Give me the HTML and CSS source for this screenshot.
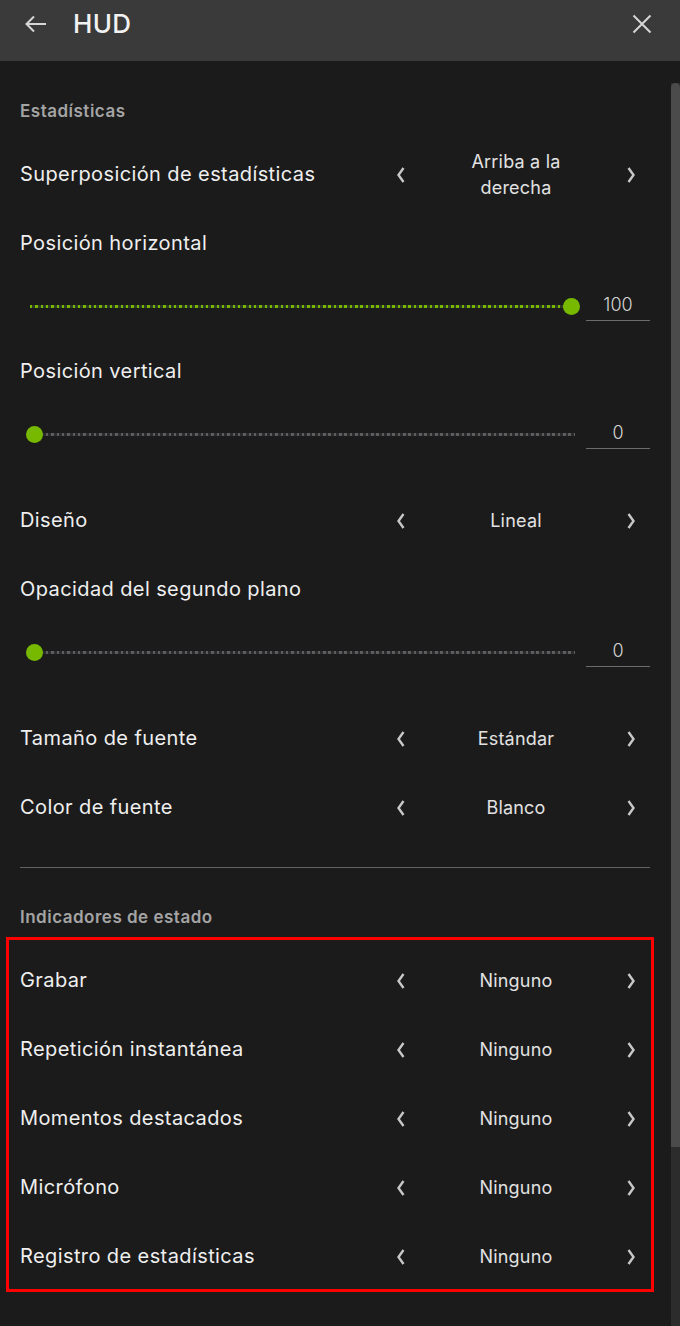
FILE: index.html
```html
<!DOCTYPE html>
<html lang="es">
<head>
<meta charset="utf-8">
<title>HUD</title>
<link rel="stylesheet" href="styles.css">
</head>
<body>
<header class="topbar">
  <svg class="icon back" width="24" height="20" viewBox="0 0 24 20"><path d="M22 10H3M10 2.5L2.5 10L10 17.5" fill="none" stroke="#d6d6d6" stroke-width="2"/></svg>
  <h1 class="title">HUD</h1>
  <svg class="icon close" width="20" height="20" viewBox="0 0 20 20"><path d="M1.5 1.5L18.5 18.5M18.5 1.5L1.5 18.5" fill="none" stroke="#d6d6d6" stroke-width="2"/></svg>
</header>

<main class="panel">
  <section class="group">
    <h2 class="section-title">Estadísticas</h2>

    <div class="row">
      <span class="label">Superposición de estadísticas</span>
      <div class="control">
        <span class="chev"><svg width="12" height="18" viewBox="0 0 12 18"><path d="M8.5 2L3.5 9L8.5 16" fill="none" stroke="#c8c8c8" stroke-width="2.4"/></svg></span>
        <span class="value two">Arriba a la derecha</span>
        <span class="chev"><svg width="12" height="18" viewBox="0 0 12 18"><path d="M3.5 2L8.5 9L3.5 16" fill="none" stroke="#c8c8c8" stroke-width="2.4"/></svg></span>
      </div>
    </div>

    <div class="row"><span class="label">Posición horizontal</span></div>
    <div class="slider-row">
      <div class="slider">
        <div class="track"><div class="fill" style="width:100%"></div><div class="rest"></div></div>
        <span class="thumb" style="left:calc((100% - 16px) * 1)"></span>
      </div>
      <div class="num">100</div>
    </div>

    <div class="row"><span class="label">Posición vertical</span></div>
    <div class="slider-row spaced">
      <div class="slider">
        <div class="track"><div class="fill" style="width:0%"></div><div class="rest"></div></div>
        <span class="thumb" style="left:calc((100% - 16px) * 0)"></span>
      </div>
      <div class="num">0</div>
    </div>

    <div class="row">
      <span class="label">Diseño</span>
      <div class="control">
        <span class="chev"><svg width="12" height="18" viewBox="0 0 12 18"><path d="M8.5 2L3.5 9L8.5 16" fill="none" stroke="#c8c8c8" stroke-width="2.4"/></svg></span>
        <span class="value">Lineal</span>
        <span class="chev"><svg width="12" height="18" viewBox="0 0 12 18"><path d="M3.5 2L8.5 9L3.5 16" fill="none" stroke="#c8c8c8" stroke-width="2.4"/></svg></span>
      </div>
    </div>

    <div class="row"><span class="label">Opacidad del segundo plano</span></div>
    <div class="slider-row spaced">
      <div class="slider">
        <div class="track"><div class="fill" style="width:0%"></div><div class="rest"></div></div>
        <span class="thumb" style="left:calc((100% - 16px) * 0)"></span>
      </div>
      <div class="num">0</div>
    </div>

    <div class="row">
      <span class="label">Tamaño de fuente</span>
      <div class="control">
        <span class="chev"><svg width="12" height="18" viewBox="0 0 12 18"><path d="M8.5 2L3.5 9L8.5 16" fill="none" stroke="#c8c8c8" stroke-width="2.4"/></svg></span>
        <span class="value">Estándar</span>
        <span class="chev"><svg width="12" height="18" viewBox="0 0 12 18"><path d="M3.5 2L8.5 9L3.5 16" fill="none" stroke="#c8c8c8" stroke-width="2.4"/></svg></span>
      </div>
    </div>

    <div class="row">
      <span class="label">Color de fuente</span>
      <div class="control">
        <span class="chev"><svg width="12" height="18" viewBox="0 0 12 18"><path d="M8.5 2L3.5 9L8.5 16" fill="none" stroke="#c8c8c8" stroke-width="2.4"/></svg></span>
        <span class="value">Blanco</span>
        <span class="chev"><svg width="12" height="18" viewBox="0 0 12 18"><path d="M3.5 2L8.5 9L3.5 16" fill="none" stroke="#c8c8c8" stroke-width="2.4"/></svg></span>
      </div>
    </div>
  </section>

  <hr class="divider">

  <section class="group indicators">
    <h2 class="section-title">Indicadores de estado</h2>

    <div class="row">
      <span class="label">Grabar</span>
      <div class="control">
        <span class="chev"><svg width="12" height="18" viewBox="0 0 12 18"><path d="M8.5 2L3.5 9L8.5 16" fill="none" stroke="#c8c8c8" stroke-width="2.4"/></svg></span>
        <span class="value">Ninguno</span>
        <span class="chev"><svg width="12" height="18" viewBox="0 0 12 18"><path d="M3.5 2L8.5 9L3.5 16" fill="none" stroke="#c8c8c8" stroke-width="2.4"/></svg></span>
      </div>
    </div>
    <div class="row">
      <span class="label">Repetición instantánea</span>
      <div class="control">
        <span class="chev"><svg width="12" height="18" viewBox="0 0 12 18"><path d="M8.5 2L3.5 9L8.5 16" fill="none" stroke="#c8c8c8" stroke-width="2.4"/></svg></span>
        <span class="value">Ninguno</span>
        <span class="chev"><svg width="12" height="18" viewBox="0 0 12 18"><path d="M3.5 2L8.5 9L3.5 16" fill="none" stroke="#c8c8c8" stroke-width="2.4"/></svg></span>
      </div>
    </div>
    <div class="row">
      <span class="label">Momentos destacados</span>
      <div class="control">
        <span class="chev"><svg width="12" height="18" viewBox="0 0 12 18"><path d="M8.5 2L3.5 9L8.5 16" fill="none" stroke="#c8c8c8" stroke-width="2.4"/></svg></span>
        <span class="value">Ninguno</span>
        <span class="chev"><svg width="12" height="18" viewBox="0 0 12 18"><path d="M3.5 2L8.5 9L3.5 16" fill="none" stroke="#c8c8c8" stroke-width="2.4"/></svg></span>
      </div>
    </div>
    <div class="row">
      <span class="label">Micrófono</span>
      <div class="control">
        <span class="chev"><svg width="12" height="18" viewBox="0 0 12 18"><path d="M8.5 2L3.5 9L8.5 16" fill="none" stroke="#c8c8c8" stroke-width="2.4"/></svg></span>
        <span class="value">Ninguno</span>
        <span class="chev"><svg width="12" height="18" viewBox="0 0 12 18"><path d="M3.5 2L8.5 9L3.5 16" fill="none" stroke="#c8c8c8" stroke-width="2.4"/></svg></span>
      </div>
    </div>
    <div class="row">
      <span class="label">Registro de estadísticas</span>
      <div class="control">
        <span class="chev"><svg width="12" height="18" viewBox="0 0 12 18"><path d="M8.5 2L3.5 9L8.5 16" fill="none" stroke="#c8c8c8" stroke-width="2.4"/></svg></span>
        <span class="value">Ninguno</span>
        <span class="chev"><svg width="12" height="18" viewBox="0 0 12 18"><path d="M3.5 2L8.5 9L3.5 16" fill="none" stroke="#c8c8c8" stroke-width="2.4"/></svg></span>
      </div>
    </div>

    <div class="highlight"></div>
  </section>

  <div class="scrollbar"><div class="scroll-thumb"></div></div>
</main>
</body>
</html>
```

FILE: styles.css
```css
* { box-sizing: border-box; }

html, body {
  margin: 0;
  padding: 0;
  background: #1b1b1b;
}

body {
  width: 680px;
  height: 1326px;
  overflow: hidden;
  font-family: Inter, "Noto Sans", "Liberation Sans", sans-serif;
  color: #ececec;
}

.topbar {
  height: 61px;
  background: #3a3a3a;
  display: flex;
  align-items: flex-start;
  padding: 8px 28px 0 24px;
}

.icon {
  display: block;
  margin-top: 6px;
}

.title {
  margin: 0 0 0 25px;
  flex: 1;
  font-size: 26px;
  font-weight: 500;
  line-height: 32px;
  color: #f2f2f2;
  letter-spacing: 0.3px;
}

.panel {
  position: relative;
  height: 1265px;
  padding: 40px 30px 0 20px;
}

.section-title {
  margin: 0 0 19px;
  font-size: 17px;
  font-weight: 600;
  line-height: 20px;
  color: #a4a4a4;
  letter-spacing: 0.5px;
}

.row {
  height: 69px;
  display: flex;
  align-items: center;
  justify-content: space-between;
}

.label {
  font-size: 20px;
  font-weight: 400;
  letter-spacing: 0.4px;
  color: #efefef;
  margin-top: -1px;
}

.control {
  width: 268px;
  display: flex;
  align-items: center;
}

.chev {
  width: 38px;
  height: 20px;
  display: flex;
  align-items: center;
  justify-content: center;
}

.value {
  flex: 1;
  padding: 0 34px;
  text-align: center;
  font-size: 18px;
  line-height: 26px;
  letter-spacing: 0.2px;
  color: #e2e2e2;
}

.slider-row {
  height: 59px;
  display: flex;
  align-items: flex-start;
}

.slider-row.spaced { margin-bottom: 21px; }

.slider {
  position: relative;
  flex: 1;
  height: 16px;
  margin: 20px 7px 0 6px;
  padding: 0 4px;
  display: flex;
  align-items: center;
}

.track {
  flex: 1;
  height: 3px;
  display: flex;
}

.fill {
  height: 100%;
  background: repeating-linear-gradient(90deg, #76b900 0 2.5px, #2f3a24 2.5px 5.33px);
}

.rest {
  flex: 1;
  height: 100%;
  background: repeating-linear-gradient(90deg, #5e5e5e 0 2.5px, #2b2b2f 2.5px 5.33px);
}

.thumb {
  position: absolute;
  top: 0;
  width: 17px;
  height: 17px;
  margin-top: -0.5px;
  border-radius: 50%;
  background: #76b900;
}

.num {
  width: 64px;
  height: 31px;
  margin-top: 12px;
  border-bottom: 1px solid #6c6c6c;
  text-align: center;
  font-size: 18px;
  font-weight: 300;
  line-height: 30px;
  color: #d4d4d4;
}

.divider {
  margin: 25px 0 39px;
  border: 0;
  height: 1px;
  background: #626262;
}

.indicators {
  position: relative;
}

.highlight {
  position: absolute;
  top: 30px;
  left: -14px;
  width: 648px;
  height: 355px;
  border: 3px solid #ff0000;
  pointer-events: none;
}

.scrollbar {
  position: absolute;
  top: 22px;
  right: 0;
  bottom: 0;
  width: 9px;
  background: #2c2c2c;
}

.scroll-thumb {
  height: 1064px;
  background: #4b4b4b;
  border-radius: 5px 5px 0 0;
}
```
